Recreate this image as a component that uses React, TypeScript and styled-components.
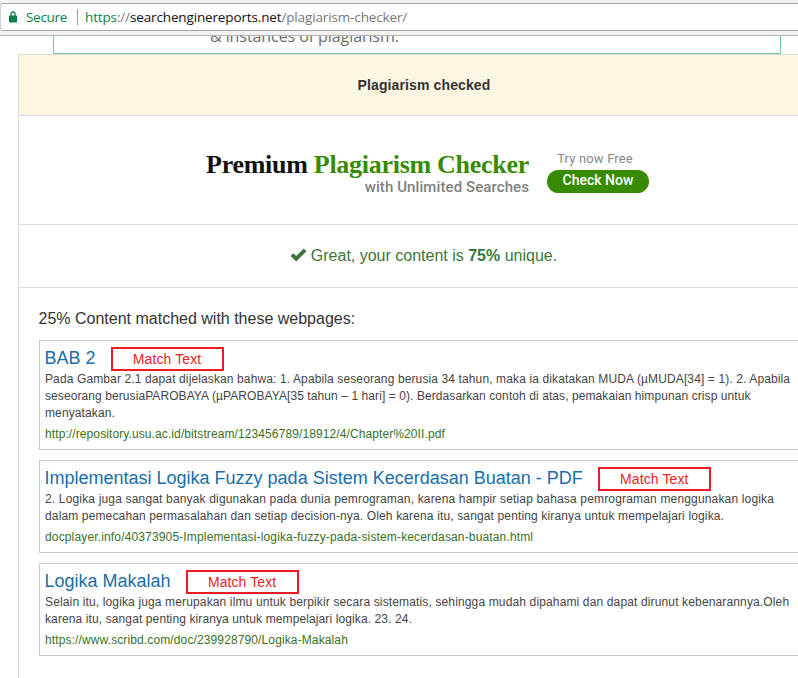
import React from "react";
import styled, { createGlobalStyle } from "styled-components";

const GlobalStyle = createGlobalStyle`
  * { box-sizing: border-box; }
  body {
    margin: 0;
    background: #fff;
    overflow: hidden;
    font-family: "Liberation Sans", Arial, sans-serif;
  }
`;

const Window = styled.div`
  width: 798px;
  height: 678px;
  overflow: hidden;
  display: flex;
  flex-direction: column;
  background: #fff;
`;

const Toolbar = styled.header`
  flex: none;
  height: 36px;
  padding-top: 3px;
  background: #f2f2f2;
  border-bottom: 1px solid #b2b2b2;
`;

const AddressBar = styled.div`
  height: 28px;
  margin-right: -4px;
  display: flex;
  align-items: center;
  padding-left: 8px;
  background: #fff;
  border: 1px solid #a6a6a6;
  border-left-color: #d0d0d0;
  border-radius: 3px 0 0 3px;
  font: 13.5px/24px "Open Sans", "Noto Sans", sans-serif;
  color: #777;
  white-space: pre;
`;

const LockIcon = styled.svg`
  flex: none;
  width: 8px;
  height: 12px;
  margin: -1px 9px 0 0;
`;

const Secure = styled.span`
  width: 51px;
  color: #0b8043;
  letter-spacing: -0.3px;
`;

const Divider = styled.i`
  width: 1px;
  height: 16px;
  margin-right: 7px;
  background: #a0a0a0;
`;

const Address = styled.span`
  letter-spacing: -0.14px;
`;
const Scheme = styled.span`
  color: #0b8043;
`;
const Host = styled.span`
  color: #111;
`;

const IntroBox = styled.section`
  flex: none;
  width: 728px;
  height: 18px;
  margin-left: 53px;
  padding-left: 156px;
  overflow: hidden;
  border: solid #76cba6;
  border-width: 0 1px 1px;
  color: #6c6c6c;
  font: 16px/22px "Open Sans", sans-serif;
  white-space: nowrap;
`;

const IntroText = styled.p`
  margin: -11px 0 0;
  letter-spacing: -0.08px;
`;

const Panel = styled.main`
  flex: 1;
  margin-left: 18px;
  border: solid #dadada;
  border-width: 1px 0 0 1px;
`;

const Band = styled.div<{ $height: number; $tint?: string }>`
  height: ${(p) => p.$height}px;
  display: flex;
  align-items: center;
  justify-content: center;
  background: ${(p) => p.$tint ?? "#fff"};
  border-bottom: 1px solid #dadada;
`;

const StatusText = styled.strong`
  margin-left: 31px;
  color: #333;
  font-size: 14px;
  letter-spacing: 0.12px;
`;

const Promo = styled(Band)`
  align-items: flex-start;
  justify-content: flex-start;
  padding: 34px 0 0 187px;
`;

const PromoCopy = styled.div`
  width: 323px;
  text-align: right;
  white-space: nowrap;
`;

const PromoTitle = styled.h1`
  margin: 0;
  color: #111;
  font: bold 26px/30px "Liberation Serif", serif;
  letter-spacing: -0.28px;
`;

const Accent = styled.span`
  color: #388a02;
`;

const PromoSub = styled.p`
  margin: -2px 0 0;
  color: #808080;
  font: 500 15px/18px Roboto, sans-serif;
  letter-spacing: 0.09px;
`;

const PromoAction = styled.div`
  width: 102px;
  margin-left: 18px;
  text-align: center;
`;

const TryText = styled.p`
  margin: 0 6px 2px 0;
  color: #888;
  font: 13px/18px Roboto, sans-serif;
  letter-spacing: 0.15px;
`;

const CheckButton = styled.button`
  display: block;
  width: 102px;
  height: 23px;
  padding: 0 0 2px;
  border: 0;
  border-radius: 12px;
  background: #388a02;
  color: #fff;
  font: 500 14px/21px Roboto, sans-serif;
`;

const ResultText = styled.p`
  display: flex;
  align-items: center;
  margin: 0 0 0 30px;
  color: #3c763d;
  font-size: 16px;
  white-space: pre;
`;

const TickIcon = styled.svg`
  width: 17px;
  height: 14px;
  margin: -2px 4px 0 0;
`;

const MatchesHeading = styled.h2`
  margin: 20px 0 11px 19.5px;
  color: #333;
  font: 16px/21px "Liberation Sans", sans-serif;
`;

const Matches = styled.div`
  display: flex;
  flex-direction: column;
  gap: 10px;
  margin-left: 20px;
`;

const Card = styled.article`
  padding: 0 0 6px 5px;
  border: 1px solid #ccc;
  border-right: 0;
  white-space: nowrap;
`;

const CardHead = styled.div`
  display: flex;
  height: 30px;
`;

const CardTitle = styled.a`
  margin-left: -0.5px;
  color: #1a6ea8;
  font-size: 18px;
  line-height: 34px;
`;

const MatchButton = styled.button`
  width: 113px;
  height: 24px;
  margin: 6px 0 0 15.5px;
  padding: 0 1px 0 0;
  border: 2px solid #ed1c24;
  background: #fff;
  color: #ed1c24;
  font: 14px/20px "Liberation Sans", sans-serif;
  letter-spacing: 0.1px;
`;

const Line = styled.div<{ $tracking: number }>`
  height: 17px;
  color: #444;
  font-size: 12px;
  line-height: 17px;
  letter-spacing: ${(p) => p.$tracking}px;
`;

const Source = styled(Line)`
  margin-top: 4px;
  color: #3a6f1e;
`;

type Match = {
  title: string;
  lines: [string, number][];
  url: string;
  urlTracking: number;
};

const matches: Match[] = [
  {
    title: "BAB 2",
    lines: [
      ["Pada Gambar 2.1 dapat dijelaskan bahwa: 1. Apabila seseorang berusia 34 tahun, maka ia dikatakan MUDA (µMUDA[34] = 1). 2. Apabila", 0.12],
      ["seseorang berusiaPAROBAYA (µPAROBAYA[35 tahun – 1 hari] = 0). Berdasarkan contoh di atas, pemakaian himpunan crisp untuk", 0.083],
      ["menyatakan.", 0.12],
    ],
    url: "http://repository.usu.ac.id/bitstream/123456789/18912/4/Chapter%20II.pdf",
    urlTracking: 0.1,
  },
  {
    title: "Implementasi Logika Fuzzy pada Sistem Kecerdasan Buatan - PDF",
    lines: [
      ["2. Logika juga sangat banyak digunakan pada dunia pemrograman, karena hampir setiap bahasa pemrograman menggunakan logika", 0.165],
      ["dalam pemecahan permasalahan dan setiap decision-nya. Oleh karena itu, sangat penting kiranya untuk mempelajari logika.", 0.14],
    ],
    url: "docplayer.info/40373905-Implementasi-logika-fuzzy-pada-sistem-kecerdasan-buatan.html",
    urlTracking: 0.15,
  },
  {
    title: "Logika Makalah",
    lines: [
      ["Selain itu, logika juga merupakan ilmu untuk berpikir secara sistematis, sehingga mudah dipahami dan dapat dirunut kebenarannya.Oleh", 0.14],
      ["karena itu, sangat penting kiranya untuk mempelajari logika. 23. 24.", 0.11],
    ],
    url: "https://www.scribd.com/doc/239928790/Logika-Makalah",
    urlTracking: 0.12,
  },
];

export default function App() {
  return (
    <Window>
      <GlobalStyle />
      <Toolbar>
        <AddressBar>
          <LockIcon viewBox="0 0 8 12">
            <path d="M2 5V3a2 2 0 0 1 4 0v2" fill="none" stroke="#0b8043" strokeWidth="1.3" />
            <rect y="4.5" width="8" height="7" rx="0.6" fill="#0b8043" />
          </LockIcon>
          <Secure>Secure</Secure>
          <Divider />
          <Address>
            <Scheme>https</Scheme>://<Host>searchenginereports.net</Host>/plagiarism-checker/
          </Address>
        </AddressBar>
      </Toolbar>
      <IntroBox>
        <IntroText>&amp; instances of plagiarism.</IntroText>
      </IntroBox>
      <Panel>
        <Band $height={61} $tint="#fdf6e2">
          <StatusText>Plagiarism checked</StatusText>
        </Band>
        <Promo $height={109}>
          <PromoCopy>
            <PromoTitle>
              Premium <Accent>Plagiarism Checker</Accent>
            </PromoTitle>
            <PromoSub>with Unlimited Searches</PromoSub>
          </PromoCopy>
          <PromoAction>
            <TryText>Try now Free</TryText>
            <CheckButton>Check Now</CheckButton>
          </PromoAction>
        </Promo>
        <Band $height={63}>
          <ResultText>
            <TickIcon viewBox="0 0 17 14">
              <path d="M0.5 8 3.3 5.2 6.2 8 13.7 0.5 16.5 3.2 6.2 13.5Z" fill="#3c763d" />
            </TickIcon>
            Great, your content is <b>75%</b> unique.
          </ResultText>
        </Band>
        <MatchesHeading>25% Content matched with these webpages:</MatchesHeading>
        <Matches>
          {matches.map((m) => (
            <Card key={m.url}>
              <CardHead>
                <CardTitle>{m.title}</CardTitle>
                <MatchButton>Match Text</MatchButton>
              </CardHead>
              {m.lines.map(([text, tracking]) => (
                <Line key={text} $tracking={tracking}>
                  {text}
                </Line>
              ))}
              <Source $tracking={m.urlTracking}>{m.url}</Source>
            </Card>
          ))}
        </Matches>
      </Panel>
    </Window>
  );
}
